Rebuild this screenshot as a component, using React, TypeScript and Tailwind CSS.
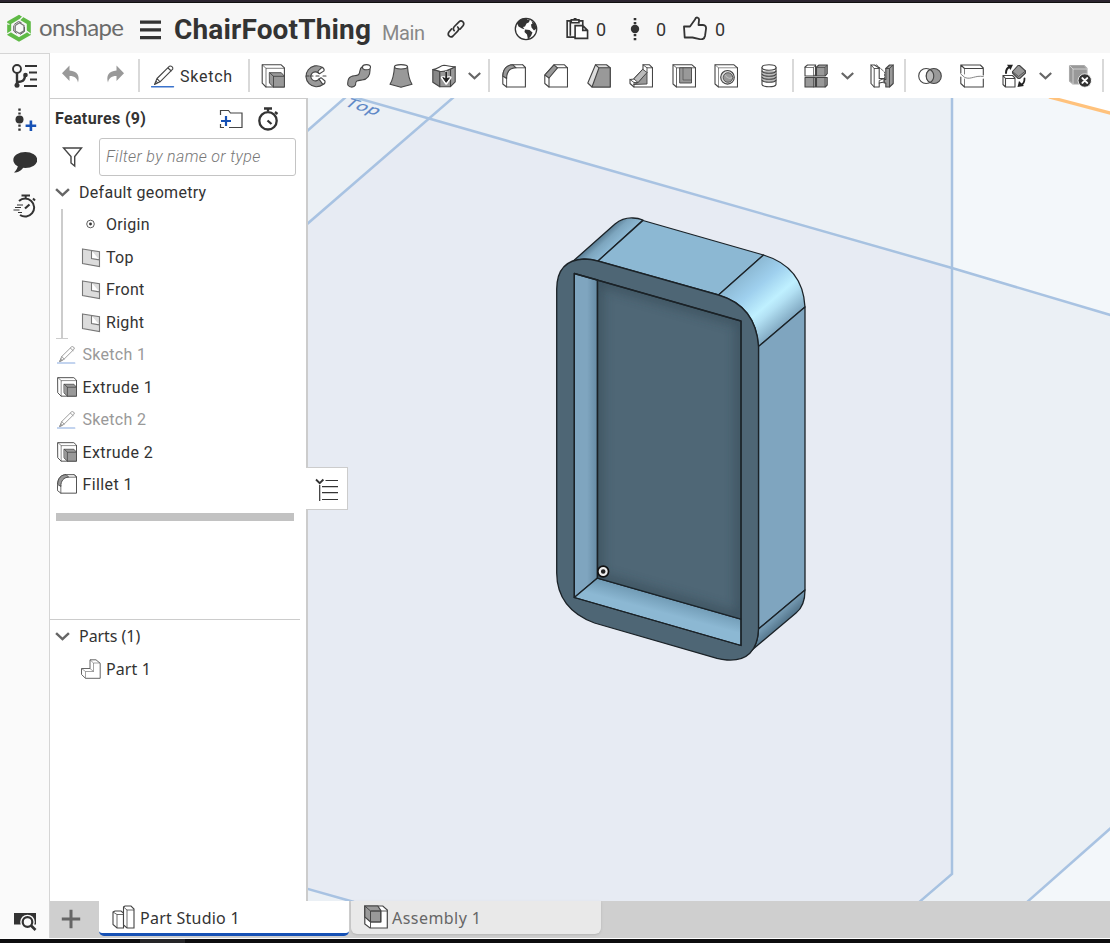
import React from "react";

type P = { className?: string };

const Svg = ({ className = "w-6 h-6", children }: { className?: string; children: React.ReactNode }) => (
  <svg viewBox="0 0 24 24" className={`shrink-0 ${className}`} fill="none" stroke="#444" strokeWidth="1.1" strokeLinejoin="round" strokeLinecap="round">
    {children}
  </svg>
);

const G = "#999";

const Pencil = ({ className }: P) => (
  <Svg className={className}>
    <path d="M3.5 20.5 6 14.5 18.5 2.2c1.6-.8 4 1 3.2 3L9 17.8zM6 14.5l3 3.3M17 4l3.3 3M3.5 20.5l1.5-3.3 1.6 1.8z" />
    <path d="M.5 22.8h22" stroke="#3b73cc" strokeWidth="1.4" />
  </Svg>
);
const Extrude = ({ className }: P) => (
  <Svg className={className}>
    <path d="M1.2.8h19l3.2 3V23H5l-3.8-3.8z" fill="#fff" />
    <path d="M5 23V4.3h18.4M1.2.8 5 4.3" strokeWidth=".7" />
    <path d="M8.7 8.7h11.6l3.1 3.6V23H12.5l-3.8-3.6z" fill={G} strokeWidth=".9" />
    <path d="M8.7 8.7l3.8 3.6h11M12.5 12.3V23" strokeWidth=".9" />
  </Svg>
);
const Fillet = ({ className }: P) => (
  <Svg className={className}>
    <path d="M.8 12C1 5 5 .9 11 .8h9.8l2.600 2.600V23H4.600L.8 20z" fill="#fff" />
    <path d="M.8 12C1 5 5 .9 11 .8l3 3C8 4 4.600 8 4.600 14.500z" fill={G} />
    <path d="M14 3.800h9.400M20.800.8l2.600 3M4.600 14v9" strokeWidth=".9" />
  </Svg>
);
const Chevron = ({ className = "w-[13px] h-[8px]" }: P) => (
  <svg viewBox="0 0 13 8" className={`shrink-0 ${className}`} fill="none" stroke="#666" strokeWidth="2.2">
    <path d="M.8 1l5.7 5.3L12.2 1" />
  </svg>
);
const Plane = () => (
  <svg viewBox="0 0 20 20" className="h-5 w-5 shrink-0" fill="#dcdcdc" stroke="#777" strokeWidth="1.1">
    <path d="M1.500 1l17 2.800v14.800l-17-3zM10.500 2.500v8l8 1.400" />
  </svg>
);
const Bars = () => (
  <svg viewBox="0 0 21 20" className="h-5 w-[21px] shrink-0" fill="#333">
    <path d="M0 .5h21v3.200H0zM0 8.200h21v3.200H0zM0 16h21v3.200H0z" />
  </svg>
);
const Sep = ({ className = "" }: P) => <div className={`h-[33px] w-[2px] shrink-0 bg-[#d9d9d9] ${className}`} />;
const Cell = ({ className = "", children }: { className?: string; children: React.ReactNode }) => (
  <button className={`flex h-full shrink-0 items-center justify-center ${className}`}>{children}</button>
);

const Toolbar = () => (
  <div className="flex h-[45px] w-[1060px] items-center overflow-hidden bg-white">
    <Cell className="w-[42px]">
      <Svg><path d="M10.500 1.500v5c8 .5 10.500 5.500 8.500 12-.8-4-3-6.500-8.500-6.500v5L3 9.300z" fill={G} stroke="none" /></Svg>
    </Cell>
    <Cell className="w-[46px]">
      <Svg><path d="M13.500 1.500v5c-8 .5-10.500 5.500-8.500 12 .8-4 3-6.500 8.500-6.500v5L21 9.300z" fill={G} stroke="none" /></Svg>
    </Cell>
    <Sep />
    <button className="flex h-full w-[108px] shrink-0 items-center gap-[5px] pl-[11px] text-base tracking-[0.75px] text-[#333]">
      <Pencil /> <span className="pt-[3px]">Sketch</span>
    </button>
    <Sep />
    <Cell className="w-[46px]"><Extrude /></Cell>
    <Cell className="w-10">
      <Svg>
        <path d="M18 3.300A10.500 10.500 0 1 0 19 20.500l-4-5.500a4.500 4.500 0 1 1-.5-5.800z" fill={G} />
        <path d="M18 3.300c2 1 2.500 2.200 2 3.600l-4.500 2.900c-1.500-1-2-2-1-3.200zM15 15l2-1.300 4 3.300c.3 1.600-.6 2.900-2 3.500z" fill="#fff" />
        <path d="M2 12h7M12 12h3M19 12h4.500" strokeDasharray="3 1.500" />
      </Svg>
    </Cell>
    <Cell className="w-[45px]">
      <Svg>
        <path d="M.8 21c-.5-5 1-9 6.500-9.300 4-.2 5-.7 5.500-4.500.3-2.500 1-3.900 2.900-5l7.300 2.500c.4 6-2 10.500-8 11.300-5 .6-6.500.5-6.500 5-1.500 2.800-5.800 2.800-7.700 0z" fill={G} />
        <ellipse cx="19.500" cy="3.200" rx="4" ry="2.600" fill="#fff" />
      </Svg>
    </Cell>
    <Cell className="w-[39px]">
      <Svg>
        <path d="M5.500 2.500C5 10 4 15.500 1 20.300l11 3 11-3C20 15.500 19 10 18.500 2.500z" fill={G} />
        <ellipse cx="12" cy="2.800" rx="6.500" ry="2.200" fill="#fff" />
      </Svg>
    </Cell>
    <Cell className="w-12">
      <Svg>
        <path d="M.8 5.500l7 1.800v15.500l-7-4.500z" fill="#888" />
        <path d="M7.800 7.300c5 1 10-1.500 15.400-4.500v15l-5 5H7.800z" fill={G} />
        <path d="M.8 5.500C6 5.200 8 1.500 12 1.300c4 0 6 1.800 11.200 1.500-5 2-10 5.500-15.400 4.500z" fill="#fff" />
        <path d="M18.500 6v16.500" />
        <path d="M14.200 8v7.500M10 13.500l4.200 6 4.200-6z" stroke="#fff" strokeWidth="2.400" fill="#fff" />
        <path d="M14.200 8.500v6" stroke="#222" strokeWidth="1.900" /><path d="M11 13.800l3.200 4.500 3.200-4.500-3.200 1z" stroke="#222" strokeWidth="1" fill="#222" />
      </Svg>
    </Cell>
    <Cell className="w-[13px]"><Chevron /></Cell>
    <Sep className="ml-[7px]" />
    <Cell className="w-[47px]"><Fillet /></Cell>
    <Cell className="w-[38px]">
      <Svg>
        <path d="M.8 11L10 .8h10.500l3 3V23H5l-4.200-3.500z" fill="#fff" />
        <path d="M.8 11L10 .8l3.500 3L5 14z" fill={G} /><path d="M13.500 3.800h10M5 14v9" />
      </Svg>
    </Cell>
    <Cell className="w-[47px]">
      <Svg>
        <path d="M.8 19L8.500 .8h11l3.700 3V23H5z" fill="#ddd" /><path d="M5 23L12 3.800h11.200V23zM8.500.8l3.500 3" fill={G} />
      </Svg>
    </Cell>
    <Cell className="w-[38px]">
      <Svg>
        <path d="M5 23l-4-3.500v-4l4-.5 9-9.500V.8h6.500l3 3V23z" fill="#fff" />
        <path d="M9 18.500L18 8.500V20l-13 .5z" fill={G} strokeWidth=".9" />
        <path d="M14 .8l4 3h5.500M18 3.800v4.700M5 23v-4.500l4 0M1 15.500l4 3" strokeWidth=".9" />
        <path d="M5 15l4 3.500 9-10-4-3z" fill="#bbb" strokeWidth=".9" />
      </Svg>
    </Cell>
    <Cell className="w-[47px]">
      <Svg>
        <path d="M1 .8h19l3.500 3V23H4.500L1 20z" fill="#fff" /><path d="M4.500 23V3.800h19M1 .8l3.500 3" strokeWidth=".8" />
        <path d="M8 3.800h11.500V19H8z" fill={G} strokeWidth=".9" /><path d="M11 4v12h8.500" strokeWidth=".6" />
      </Svg>
    </Cell>
    <Cell className="w-[38px]">
      <Svg>
        <path d="M1 .8h19l3.500 3V23H4.500L1 20z" fill="#fff" /><path d="M4.500 23V3.800h19M1 .8l3.500 3" strokeWidth=".6" />
        <circle cx="13.500" cy="13.300" r="6.800" fill="#ddd" /><circle cx="14" cy="13.500" r="4.800" fill={G} strokeWidth=".8" /><path d="M11.500 11.500c2 3 5 3.500 6.500 2" stroke="#bbb" />
      </Svg>
    </Cell>
    <Cell className="w-[47px]">
      <Svg>
        <path d="M5 3.500v17c1 3 13 3 14 0v-17" fill="#fff" /><path d="M5 7v9c2 3 12 3 14 0V7z" fill="#bbb" stroke="none" />
        <ellipse cx="12" cy="3.500" rx="7" ry="2.700" fill="#fff" />
        <path d="M5 7c1 3 13 3 14 0M5 10c1 3 13 3 14 0M5 13c1 3 13 3 14 0M5 16c1 3 13 3 14 0" />
      </Svg>
    </Cell>
    <Sep />
    <Cell className="w-[44px]">
      <Svg>
        <path d="M1 3l2.500-2h8v11H1z" fill="#fff" /><path d="M12.500 3L15 1h8.200v8.500l-2 2.500h-8.700zM1 13.500h10.500V23H1zM12.500 13.500h10.700V21l-2 2h-8.700z" fill={G} />
        <path d="M1 3.500h8.500V12l2-1.500M9.500 3.500l2-2.500M12.500 3.500H21V12l2.200-2M21 3.500L23.200 1M21 13.500V23M9.500 13.500V23" strokeWidth=".7" />
      </Svg>
    </Cell>
    <Cell className="w-[18px]"><Chevron /></Cell>
    <Cell className="w-12 pl-[3px]">
      <Svg>
        <path d="M1 1h3.500l4.700 3v10.500h5V18l-5 1v4H4.200L1 19.500z" fill="#fff" />
        <path d="M1 1l3.200 3.500V23M4.200 4.500h5M9.200 19v-2.500l5-2" strokeWidth=".9" />
        <path d="M15.800 23v-4h-1.600v-3.500h1.600V4.500L19.500 1h3.700v18.500L19.500 23z" fill={G} /><path d="M15.800 4.500h3.700V23M19.500 4.500L23.200 1" strokeWidth=".9" />
        <path d="M6.500.8L14.500 8v8" strokeDasharray="2 1.200" strokeWidth=".8" />
      </Svg>
    </Cell>
    <Sep />
    <Cell className="w-[47px]">
      <Svg>
        <circle cx="8.200" cy="12" r="7.500" fill="#fff" /><circle cx="15.800" cy="12" r="7.500" fill={G} /><path d="M12 5.500a7.500 7.500 0 0 1 0 13 7.500 7.500 0 0 1 0-13z" fill="#bbb" />
      </Svg>
    </Cell>
    <Cell className="w-[37px]">
      <Svg>
        <path d="M.8 9V1h19.500l3 3v7M.8 13v6.500L4.500 23h18.800v-8M.8 1l3.700 3.500h18.800" /><path d="M4.500 4.500V10M4.500 15v8" strokeWidth=".7" />
        <path d="M.8 10l4 3.500c6.500 2.500 10-2.500 18.500-1" stroke="#777" strokeWidth=".9" />
      </Svg>
    </Cell>
    <Cell className="w-[48px]">
      <Svg>
        <path d="M1 11.500h9.500l2.500 2.500v9H3.500L1 20.500zM1 11.500l2.500 3H13M3.500 14.500V23" fill="#fff" />
        <path d="M10.500 7.500l5.500-6 1.500 0 6 5.500v2l-5.800 5.500h-1.500l-5.700-5.500z" fill={G} /><path d="M10.500 7.500l6 5 7-5.500" strokeWidth=".8" />
        <path d="M4 9c0-3 1-5 3.500-6" stroke="#222" strokeWidth="2" /><path d="M5 .8h6L8.500 6z" fill="#222" stroke="none" />
        <path d="M22.500 14.500c0 3-1 5.500-3.500 6.500" stroke="#222" strokeWidth="1.800" /><path d="M15.500 23l1.500-6 5 5z" fill="#222" stroke="none" />
      </Svg>
    </Cell>
    <Cell className="w-[14px]"><Chevron /></Cell>
    <Cell className="w-[50px] pl-[6px]">
      <Svg>
        <path d="M1.500 1.500h14.500l3 3V20h-14l-3.500-3z" fill="#999" stroke="#aaa" /><path d="M5 20V5h14M1.500 1.500L5 5" stroke="#d5d5d5" strokeWidth=".9" />
        <circle cx="16.800" cy="16.500" r="6.700" fill="#333" stroke="#fff" strokeWidth=".8" /><path d="M14.400 14.100l4.800 4.800M19.200 14.100l-4.800 4.800" stroke="#fff" strokeWidth="2" />
      </Svg>
    </Cell>
    <Sep />
  </div>
);

const Header = () => (
  <header className="flex h-[50px] items-center bg-[#f7f7f7] text-[#333]">
    <svg viewBox="0 0 24 28" className="ml-[7px] h-7 w-6 shrink-0" fill="none">
      <path d="M12 3.100l9.800 5.600v11.100L12 25.400 2.200 19.800V8.700z" stroke="#5fba46" strokeWidth="4" />
      <path d="M12.500 0l3.500 2.500L12 6.500M0 20l5-3M23.500 20l-5.500-4M0 9.500l2.500 1" stroke="#f7f7f7" strokeWidth="1.300" />
      <path d="M8.200 11.500l4.300-2.700 4.500 2.700v5.300l-4.500 2.700L8.200 17z" stroke="#777" strokeWidth="1.300" /><path d="M7.200 10.500l4.300-3 3 1.200M6.700 11.500v5.500l3 2.500M17.500 13v4.500l-4.500 3" stroke="#666" strokeWidth="1" />
    </svg>
    <span className="ml-[8px] w-[101px] pb-[3px] font-['Lato',sans-serif] text-2xl leading-6 tracking-[-0.650px] text-[#6b6b6b]">onshape</span>
    <div className="pt-[3px]"><Bars /></div>
    <h1 className="ml-[13px] w-[208px] shrink-0 whitespace-nowrap pt-[3px] text-[28px] font-bold leading-8 tracking-[0.15px]">ChairFootThing</h1>
    <span className="w-[64px] shrink-0 pt-[9px] text-[20px] leading-6 tracking-[-0.4px] text-[#888]">Main</span>
    <svg viewBox="0 0 20 20" className="mt-px h-5 w-5 shrink-0" fill="none" stroke="#333" strokeWidth="1.700" strokeLinecap="round">
      <path d="M8.200 11.700c-1.200-1.400-.9-3 .2-4.200l4.600-4.700c2.500-2.300 6 .6 4.200 3.700L14 10.200M11.700 8c1.400 1.400 1 3.200-.2 4.400L7 17c-2.500 2.300-6-.6-4.200-3.700L5.500 10" />
    </svg>
    <svg viewBox="0 0 24 24" className="ml-[48px] mt-px h-6 w-6 shrink-0">
      <circle cx="12" cy="12" r="10.700" fill="#fff" stroke="#333" strokeWidth="1.300" />
      <path d="M3 6c2-3 5-5 9-5l1.500 1.700 2.500-.5-1 3-2.500 1.300L11 9.500 9 10l1.500 2.200L8 11.500 4.500 9.500zM11 12.500l4.500.5 3 2.500-1.500 3.500-3 3.500-1-5-2.500-2.500zM17.500 4l3.500 2.500 1.700 5L20 13.500l-2.500-3-.5-3 1.500-1z" fill="#333" />
    </svg>
    <svg viewBox="0 0 24 24" className="ml-[28px] mt-px h-6 w-[23px] shrink-0" fill="none" stroke="#333" strokeWidth="1.700">
      <path d="M9.500 20.500H1.200V3.500H5M14 3.500h3.500V8M5.500 2.500h8v3h-8zM8 1.500h3M4.500 4v15" /><path d="M9.500 8.500h8l5 5v8.300h-13zM17.500 8.500v5h5" fill="#fff" />
    </svg>
    <span className="ml-[7px] w-[33px] pt-[2px] text-[18px]">0</span>
    <svg viewBox="0 0 12 24" className="mt-px h-6 w-3 shrink-0" fill="#333">
      <circle cx="6" cy="12" r="4.200" /><path d="M4.700 1h2.600v2.300H4.700zM4.700 5h2.600v2.300H4.700zM4.700 17h2.600v2.300H4.700zM4.700 21h2.600v2.300H4.700z" />
    </svg>
    <span className="ml-[15px] w-[27px] pt-[2px] text-[18px]">0</span>
    <Svg><path d="M1 10.500h6l5-7c.7-3 4.500-2.500 4 .8L15.500 9H20c2.500 0 3.300 1.800 3 4l-1 7c-.5 2.500-2.500 3.500-4.500 3.300L9.500 21.500H1.700z" stroke="#333" strokeWidth="1.800" /></Svg>
    <span className="ml-[8px] pt-[2px] text-[18px]">0</span>
  </header>
);

const Rail = () => (
  <aside className="flex w-[50px] shrink-0 flex-col items-center border-r border-t border-[#d5d5d5] bg-[#fafafa]">
    <svg viewBox="0 0 26 24" className="mt-[10px] h-6 w-[26px]" fill="none" stroke="#333" strokeWidth="1.900">
      <circle cx="5" cy="5" r="4" /><path d="M5 9v12M5 18c5 0 8-1 8-7" strokeWidth="2.400" /><path d="M13 2h12M17 8.500h8M18 15.500h7M12 22h13" />
      <circle cx="13.500" cy="11" r="2.300" fill="#333" stroke="none" /><circle cx="5" cy="21.200" r="2.500" fill="#333" stroke="none" />
    </svg>
    <svg viewBox="0 0 24 24" className="mt-5 h-6 w-6" fill="#333">
      <circle cx="6.500" cy="11.500" r="4" /><path d="M5.300.5h2.400v2.300H5.300zM5.300 4.500h2.400v2H5.300zM5.300 16.500h2.400v2.300H5.300zM5.300 20.500h2.400v2.300H5.300z" />
      <path d="M16.600 12.500h2.600v4h4v2.600h-4v4h-2.600v-4h-4v-2.600h4z" fill="#1651b5" />
    </svg>
    <svg viewBox="0 0 24 22" className="mt-[19px] h-[22px] w-6" fill="#333">
      <ellipse cx="12.300" cy="9" rx="12" ry="8" /><path d="M5 13c0 4-1.500 6-4 8.500 4 0 8-2 9.500-5.500z" />
    </svg>
    <svg viewBox="0 0 24 24" className="mt-[21px] h-6 w-6" fill="none" stroke="#333" strokeWidth="2">
      <path d="M6 7a9 9 0 1 1 1 14M8.500 1.500H17M12.700 1v3M20 4.500l2 2" /><path d="M12 14.500l4.500-4" strokeWidth="2.200" /><path d="M4 11h6M2 13.500h6M.5 16h6M5 18.500h4" strokeWidth="1.100" />
    </svg>
    <svg viewBox="0 0 24 20" className="mb-[7px] mt-auto h-5 w-6" fill="none" stroke="#333">
      <path d="M1 2h22v11.500H1z" fill="#333" stroke="none" /><circle cx="14.500" cy="11" r="7.300" fill="#fafafa" stroke="none" /><circle cx="14.500" cy="11" r="4.800" fill="#fafafa" strokeWidth="2.200" /><path d="M18 14.500l4.500 4.500" strokeWidth="2.600" />
    </svg>
  </aside>
);

const features: [string, "sketch" | "extrude" | "fillet"][] = [
  ["Sketch 1", "sketch"],
  ["Extrude 1", "extrude"],
  ["Sketch 2", "sketch"],
  ["Extrude 2", "extrude"],
  ["Fillet 1", "fillet"],
];

const FeaturePanel = () => (
  <section className="relative flex w-[258px] shrink-0 flex-col border-r-2 border-t border-[#ccc] bg-white text-base tracking-[0.300px] text-[#333]">
    <div className="flex h-[40px] shrink-0 items-center pl-[5px]">
      <h2 className="w-[164px] font-bold tracking-[0.350px]">Features (9)</h2>
      <svg viewBox="0 0 24 20" className="h-5 w-6" fill="none" stroke="#444" strokeWidth="1.200">
        <path d="M1.500 6V1.500h8L11.500 4H23v14.500H10M1.500 15v3.500H5" /><path d="M2 12h10M7 7v10" stroke="#1651b5" strokeWidth="2.200" />
      </svg>
      <svg viewBox="0 0 24 24" className="ml-[13px] h-6 w-6" fill="none" stroke="#333" strokeWidth="2.300">
        <circle cx="12" cy="13.800" r="8.700" /><path d="M8 1.500h8M12 1v3M19 5l2.500 2M11.500 13.500l4 3.500" />
      </svg>
    </div>
    <div className="flex h-[36px] shrink-0 items-center">
      <svg viewBox="0 0 22 22" className="ml-[12px] h-[22px] w-[22px] shrink-0" fill="none" stroke="#444" strokeWidth="1.400">
        <path d="M1.500 2h18l-6.800 8.500V20l-3.700-3v-6.500z" />
      </svg>
      <div className="ml-[15px] flex h-[38px] w-[197px] items-center rounded-[3px] border border-[#c4c4c4] pl-[6px] font-light italic tracking-[0.350px] text-[#777]">Filter by name or type</div>
    </div>
    <div className="flex h-[34px] shrink-0 items-center pl-[5px]"><Chevron className="h-[9px] w-[15px]" /><span className="ml-[9px] pt-px">Default geometry</span></div>
    <div className="ml-[11px] h-[129px] shrink-0 border-l-2 border-[#ccc]">
      <div className="flex h-[32.500px] items-center pl-[18px]">
        <svg viewBox="0 0 20 20" className="mb-[2px] h-5 w-[19px]" fill="none" stroke="#555" strokeWidth="1"><circle cx="10" cy="10" r="4" /><circle cx="10" cy="10" r="1.500" fill="#333" stroke="none" /></svg>
        <span className="ml-[6px]">Origin</span>
      </div>
      {["Top", "Front", "Right"].map((n) => (
        <div key={n} className="flex h-[32.500px] items-center pl-[18px]"><Plane /><span className="ml-[5px]">{n}</span></div>
      ))}
    </div>
    <div className="ml-[6px] h-px w-[12px] shrink-0 bg-[#ccc]" />
    {features.map(([n, k]) => (
      <div key={n} className={`flex h-[32.500px] shrink-0 items-center pl-[7px] ${k === "sketch" ? "text-[#999]" : ""}`}>
        {k === "sketch" ? <Pencil className="mb-[2px] h-[19px] w-[19px] opacity-60" /> : k === "extrude" ? <Extrude className="mb-[2px] h-5 w-5" /> : <Fillet className="mb-[2px] h-5 w-5" />}
        <span className={k === "sketch" ? "ml-[6.500px]" : "ml-[5.500px] tracking-[0.400px]"}>{n}</span>
      </div>
    ))}
    <div className="ml-[6px] mt-[11px] h-2 w-[238px] shrink-0 bg-[#c2c2c2]" />
    <div className="mt-[98px] w-[250px] border-t border-[#ccc] font-['Noto_Sans',sans-serif]">
      <div className="flex h-[33px] items-center pl-[5px]"><Chevron className="h-[9px] w-[15px]" /><span className="ml-[9px] tracking-[-0.050px]">Parts (1)</span></div>
      <div className="flex h-[33px] items-center pl-[31px]">
        <svg viewBox="0 0 20 20" className="h-5 w-5" fill="#fff" stroke="#666" strokeWidth="1">
          <path d="M9 .8h6l4.200 3.500v15H4.500L.5 15.500V9.500H9z" /><path d="M9 .8L12.500 4h6.700M12.500 4v8.500h-8L.5 9.500M9 9.500l3.500 3M4.500 12.500v6.800" fill="none" strokeWidth=".6" />
        </svg>
        <span className="ml-[5px] tracking-[0.100px]">Part 1</span>
      </div>
    </div>
    <button className="absolute left-[256px] top-[368px] z-10 flex h-[43px] w-[42px] items-center justify-center border border-l-0 border-[#ccc] bg-white">
      <svg viewBox="0 0 24 24" className="mt-[2px] h-6 w-6" fill="none" stroke="#333" strokeWidth="1.200"><path d="M1 1.500l3.700 3.700L8.400 1.500" strokeWidth="1.800" /><path d="M4.700 7v16M10.500 2.500H23M7 8.700h16M7 14.700h16M7 21.500h16" /></svg>
    </button>
  </section>
);

const Canvas = () => (
  <svg viewBox="308 98 802 803" className="h-[803px] w-[802px] shrink-0">
    <defs>
      <linearGradient id="tr" gradientUnits="userSpaceOnUse" x1="719" y1="295" x2="761.200" y2="343.800">
        <stop offset="0" stopColor="#8dbad5" /><stop offset=".3" stopColor="#9fd0ee" /><stop offset=".6" stopColor="#bff0ff" /><stop offset=".72" stopColor="#b2e0f3" /><stop offset="1" stopColor="#82aac3" />
      </linearGradient>
      <linearGradient id="tl" gradientUnits="userSpaceOnUse" x1="573" y1="261" x2="584" y2="273"><stop offset="0" stopColor="#587b92" /><stop offset=".45" stopColor="#7da6bf" /><stop offset="1" stopColor="#8cb8d3" /></linearGradient>
      <linearGradient id="br" gradientUnits="userSpaceOnUse" x1="758" y1="629" x2="767" y2="639"><stop offset="0" stopColor="#7da3bc" /><stop offset="1" stopColor="#527389" /></linearGradient>
      <linearGradient id="wall" x1="0" x2="1" y1="0" y2="0"><stop offset=".55" stopColor="#7fa5bf" /><stop offset="1" stopColor="#658aa3" /></linearGradient>
      <linearGradient id="floor" gradientUnits="userSpaceOnUse" x1="660" y1="596" x2="656" y2="611"><stop offset="0" stopColor="#719bb5" /><stop offset="1" stopColor="#8cb8d3" /></linearGradient>
      <clipPath id="pocket"><path d="M597.500 280L741 321v298l-143.500-41z" /></clipPath>
      <filter id="soft" x="-20%" y="-20%" width="140%" height="140%"><feGaussianBlur stdDeviation="6" /></filter>
    </defs>
    <path d="M308 98h802v803H308z" fill="#ebf0f5" />
    <path d="M308 98h37l-37 32z" fill="#f3f7fa" />
    <path d="M952 98h158v217l-158-47z" fill="#f3f7fa" />
    <path d="M1053 98h57v15z" fill="#fff" />
    <path d="M429 118.500L952 268v606l-32 27H350l-42-12V223z" fill="#e7ebf3" />
    <path d="M1110 829v72h-82z" fill="#f3f7fa" />
    <g fill="none" stroke="#a4c0e0" strokeWidth="2.500" opacity=".95">
      <path d="M306 132l41-36M306 225L455 96M350 96l79 22.500L952 268l160 47.500M306 888.500l48 13.500M1112 827l-86 76" />
      <path d="M952 96v778l-35 30" />
    </g>
    <path d="M1049 97l63 16.500" stroke="#ffc27c" strokeWidth="3.200" />
    <text transform="matrix(.97 .29 -.6 .56 343.500 105.500)" fontSize="18.500" fill="#5985c6" stroke="#5985c6" strokeWidth=".3" fontFamily="'Open Sans'" letterSpacing=".4">Top</text>

    <g stroke="#1b2227" strokeWidth="1.300" strokeLinejoin="round">
      <path d="M571 263L615 224q8-6.500 18-6q5 .2 10 2L598 261q-17-4.500-27 2z" fill="url(#tl)" />
      <path d="M598 261l45-40.500L763.500 255 718.500 295z" fill="#8cb8d3" />
      <path d="M718.500 295L763.500 255Q803 267 805 307L758.500 346.500Q756 306 718.500 295z" fill="url(#tr)" />
      <path d="M758.500 346.500L805 307v283l-46.500 39z" fill="#7fa5bf" />
      <path d="M758.500 629L805 590q0 16-9 23L752 650q6.500-8 6.500-21z" fill="url(#br)" />
      <path d="M556.700 289Q557 260 584 259q7 0 14 2L718.500 295Q756 306 758.500 346.500V629Q757 662 727 660q-5-.4-10-1.600L594.500 623Q557 609 556.700 573z" fill="#4e6675" />
      <path d="M574.300 273.500L597.500 280v298l-23.200 19.500z" fill="url(#wall)" />
      <path d="M574.300 597.500L597.500 578 741 619v26.500z" fill="url(#floor)" />
      <path d="M597.500 280L741 321v298l-143.500-41z" fill="#4f6776" />
      <g clipPath="url(#pocket)"><path d="M597.500 280L741 321v298l-143.500-41z" fill="none" stroke="#2b3e4a" strokeWidth="9" opacity=".55" filter="url(#soft)" /></g>
      <path d="M574.300 273.500L741 321v324.500L574.300 597.500zM597.500 280v298" fill="none" />
    </g>
    <circle cx="603.200" cy="571.500" r="4.400" fill="#222" stroke="#111" strokeWidth="3.600" />
    <circle cx="603.200" cy="571.500" r="3.400" fill="#222" stroke="#eee" strokeWidth="2.200" />
  </svg>
);

const Tabs = () => (
  <footer className="flex h-[37px] w-[1060px] bg-[#cfcfcf] font-['Noto_Sans',sans-serif] text-base text-[#333]">
    <button className="flex w-[49px] items-center justify-center pb-px pr-[7px]">
      <svg viewBox="0 0 20 20" className="h-5 w-5" stroke="#666" strokeWidth="3"><path d="M10 .8v18.400M.8 10h18.400" /></svg>
    </button>
    <div className="flex h-[35px] w-[250px] items-center gap-[4px] rounded-b-[5px] border-b-[3px] border-[#1651b5] bg-white pl-[13px]">
      <svg viewBox="0 0 24 24" className="h-6 w-6" fill="#fff" stroke="#444" strokeWidth="1.100">
        <path d="M1 7l2-1h6l2.500 2V23H5l-4-3.500z" /><path d="M1 7l4 2.500h6M5 9.500V23" fill="none" strokeWidth=".8" />
        <path d="M11.500 2l1.500-1h6l3 3v19h-7l-3.500-3z" /><path d="M11.500 2L15 5h7M15 5v18" fill="none" strokeWidth=".8" />
      </svg>
      <span className="pt-[2px] tracking-[0.250px]">Part Studio 1</span>
    </div>
    <div className="ml-[2px] flex h-[33px] w-[250px] items-center gap-[4px] rounded-b-[6px] bg-[#e9e9e9] pb-[2px] pl-[13px] text-[#666] shadow-sm">
      <svg viewBox="0 0 24 24" className="h-6 w-6" fill="#fff" stroke="#444" strokeWidth="1.200">
        <path d="M.8 1h18l4.500 4v18H6l-5.200-4z" /><path d="M.8 1h13l3 4.500V17H6.500L.8 12z" fill="#999" /><path d="M.8 1L6.500 6h17M6.500 6v17M6.500 6h10.300v11H6.500z" fill="none" strokeWidth=".9" />
      </svg>
      <span className="pt-[3px] tracking-[0.450px]">Assembly 1</span>
    </div>
  </footer>
);

export default function App() {
  return (
    <div className="flex h-[943px] w-[1110px] flex-col overflow-hidden bg-white font-['Roboto',sans-serif]">
      <div className="h-[3px] shrink-0 border-b border-[#111] bg-[#2c2530]" />
      <Header />
      <div className="flex h-[885px] shrink-0">
        <Rail />
        <main className="flex w-[1060px] flex-col">
          <Toolbar />
          <div className="flex h-[803px] w-[1060px]">
            <FeaturePanel />
            <Canvas />
          </div>
          <Tabs />
        </main>
      </div>
      <div className="mt-px flex h-1 shrink-0 bg-[#0d0d0f]"><div className="ml-[140px] w-[45px] bg-[#252528]" /></div>
    </div>
  );
}
